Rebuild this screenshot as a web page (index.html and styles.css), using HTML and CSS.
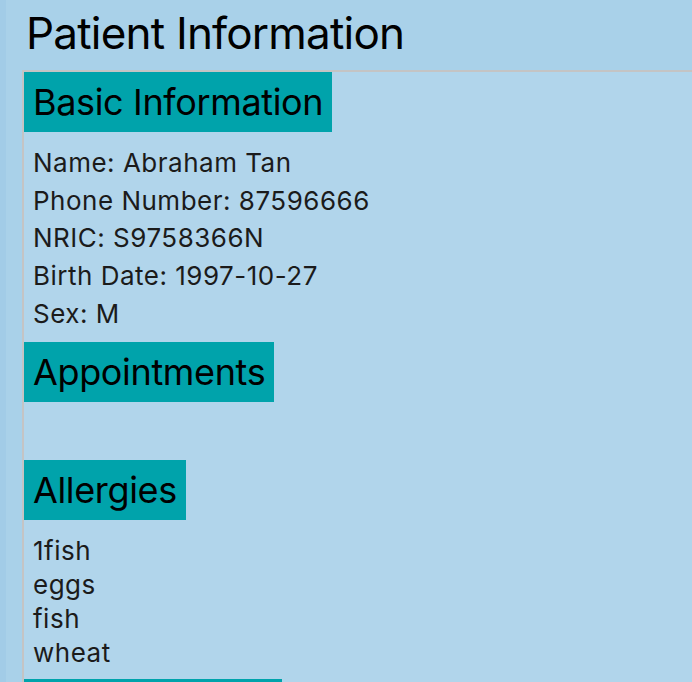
FILE: index.html
```html
<!DOCTYPE html>
<html>
<head>
<meta charset="utf-8">
<link rel="stylesheet" href="styles.css">
</head>
<body>
<div class="window">
  <h1 class="title">Patient Information</h1>
  <div class="panel">
    <section class="section">
      <h2 class="section-head">Basic Information</h2>
      <div class="details">
        <div class="line">Name: Abraham Tan</div>
        <div class="line">Phone Number: 87596666</div>
        <div class="line">NRIC: S9758366N</div>
        <div class="line">Birth Date: 1997-10-27</div>
        <div class="line">Sex: M</div>
      </div>
    </section>
    <section class="section">
      <h2 class="section-head">Appointments</h2>
      <div class="empty"></div>
    </section>
    <section class="section">
      <h2 class="section-head">Allergies</h2>
      <ul class="list">
        <li>1fish</li>
        <li>eggs</li>
        <li>fish</li>
        <li>wheat</li>
      </ul>
    </section>
    <section class="section">
      <h2 class="section-head">Medical Notes</h2>
    </section>
  </div>
</div>
</body>
</html>
```
FILE: styles.css
```css
html, body {
  margin: 0;
  padding: 0;
  height: 100%;
  overflow: hidden;
}
body {
  background: #a9d1e9;
  font-family: Inter, "Noto Sans", sans-serif;
}
.window {
  height: 100%;
  border-left: 6px solid #a2cce7;
  box-sizing: border-box;
}
.title {
  margin: 0;
  height: 70px;
  box-sizing: border-box;
  padding: 7px 0 0 20px;
  font-size: 44px;
  font-weight: 400;
  letter-spacing: -0.8px;
  color: #000;
  line-height: 53px;
}
.panel {
  margin-left: 16px;
  border-top: 2px solid #c4c4c4;
  border-left: 2px solid #c4c4c4;
  background: #b1d5eb;
  height: 100%;
}
.section {
  display: flex;
  flex-direction: column;
  align-items: flex-start;
}
.section-head {
  margin: 0;
  background: #00a3ab;
  height: 60px;
  padding: 0 9px 0 9px;
  font-size: 36px;
  font-weight: 400;
  letter-spacing: -0.35px;
  line-height: 60px;
  color: #000;
}
.details {
  padding: 12px 0 9px 9px;
  font-size: 26px;
  letter-spacing: 0.5px;
  line-height: 37.7px;
  color: #1b1b1b;
}
.empty {
  height: 58px;
}
.list {
  list-style: none;
  margin: 0;
  padding: 14px 0 9px 9px;
  font-size: 26px;
  letter-spacing: 0.5px;
  line-height: 34px;
  color: #1b1b1b;
}
```
